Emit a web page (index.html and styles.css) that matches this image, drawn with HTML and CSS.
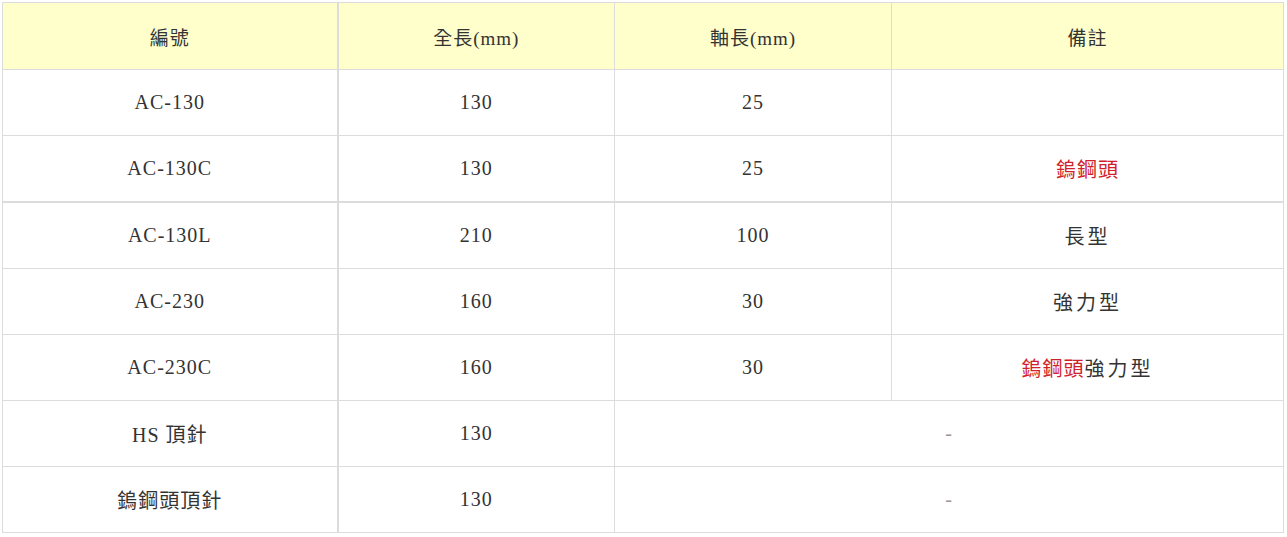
FILE: index.html
```html
<!DOCTYPE html>
<html lang="zh-Hant">
<head>
<meta charset="utf-8">
<title>規格表</title>
<link rel="stylesheet" href="styles.css">
</head>
<body>
<table class="spec">
  <colgroup>
    <col class="c1"><col class="c2"><col class="c3"><col class="c4">
  </colgroup>
  <thead>
    <tr><th class="first">編號</th><th>全長(mm)</th><th>軸長(mm)</th><th>備註</th></tr>
  </thead>
  <tbody>
    <tr><td class="first">AC-130</td><td>130</td><td>25</td><td></td></tr>
    <tr><td class="first">AC-130C</td><td>130</td><td>25</td><td><span class="red">鎢鋼頭</span></td></tr>
    <tr class="thick"><td class="first">AC-130L</td><td>210</td><td>100</td><td class="cjk">長型</td></tr>
    <tr><td class="first">AC-230</td><td>160</td><td>30</td><td class="cjk">強力型</td></tr>
    <tr><td class="first">AC-230C</td><td>160</td><td>30</td><td class="cjk"><span class="red">鎢鋼頭</span>強力型</td></tr>
    <tr><td class="first">HS 頂針</td><td>130</td><td colspan="2" class="dash">-</td></tr>
    <tr><td class="first">鎢鋼頭頂針</td><td>130</td><td colspan="2" class="dash">-</td></tr>
  </tbody>
</table>
</body>
</html>
```

FILE: styles.css
```css
html, body {
  margin: 0;
  padding: 0;
  background: #ffffff;
}

body {
  padding: 2px;
}

.spec {
  width: 1281px;
  border-collapse: collapse;
  table-layout: fixed;
  font-family: "Liberation Serif", "Noto Sans CJK TC", serif;
  font-size: 20px;
  letter-spacing: 1px;
  color: #333333;
}

.c1 { width: 335px; }
.c2 { width: 277px; }
.c3 { width: 277px; }
.c4 { width: 392px; }

.spec th,
.spec td {
  border: 1px solid #dcdcdc;
  text-align: center;
  vertical-align: middle;
  padding: 0;
  font-weight: normal;
}

.spec th {
  background: #ffffcc;
  height: 66px;
  font-size: 19px;
}

.spec td {
  height: 65px;
}

.spec .first {
  border-right: 2px solid #dcdcdc;
}

.spec tr.thick td {
  border-top: 2px solid #dcdcdc;
}

.cjk {
  letter-spacing: 3px;
}

.red {
  color: #d0202a;
  letter-spacing: 1px;
}

.dash {
  color: #999999;
}
```
